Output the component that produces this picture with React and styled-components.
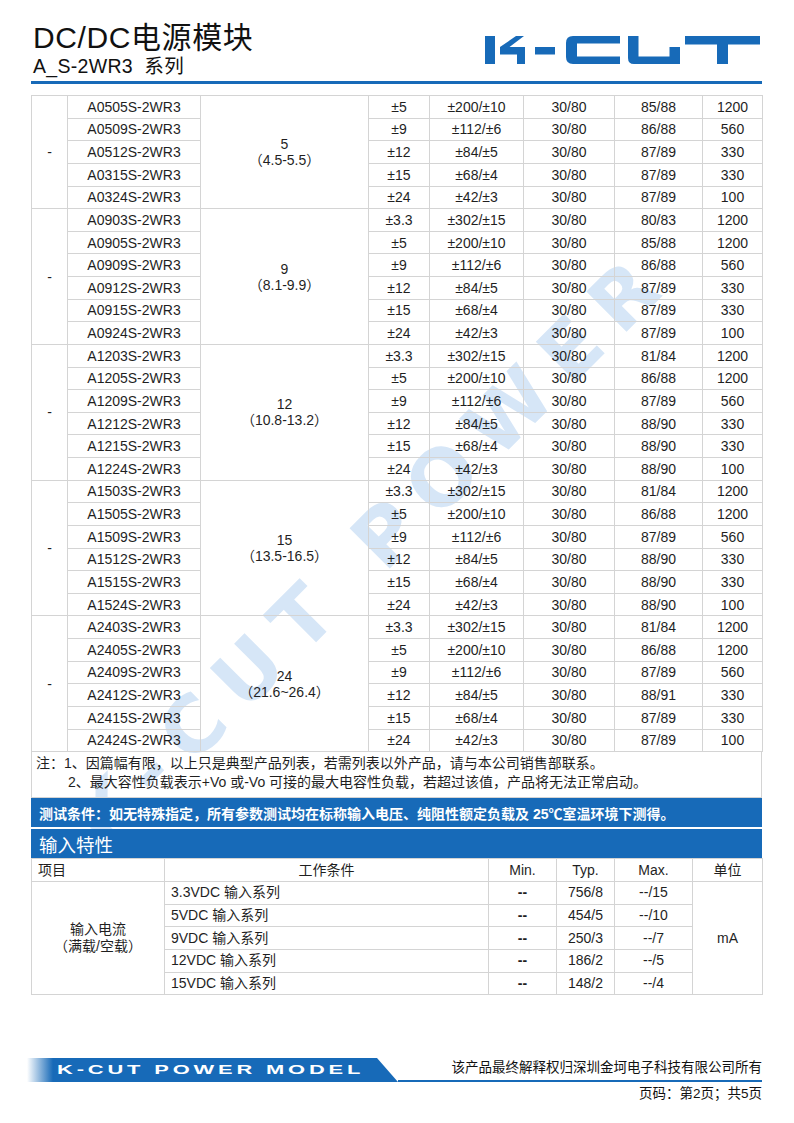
import React from "react";
import styled, { createGlobalStyle } from "styled-components";

const BLUE = "#176ab8";
const GRID = "#d4d4d4";
const INK = "#1f1f1f";

const GlobalStyle = createGlobalStyle`
  html, body {
    margin: 0;
    padding: 0;
    background: #fff;
  }
  body {
    font-family: "Liberation Sans", "Noto Sans CJK SC", sans-serif;
    color: ${INK};
  }
`;

// #region data
const groups = [
  {
    vin: "5",
    range: "（4.5-5.5）",
    rows: [
      ["A0505S-2WR3", "±5", "±200/±10", "30/80", "85/88", "1200"],
      ["A0509S-2WR3", "±9", "±112/±6", "30/80", "86/88", "560"],
      ["A0512S-2WR3", "±12", "±84/±5", "30/80", "87/89", "330"],
      ["A0315S-2WR3", "±15", "±68/±4", "30/80", "87/89", "330"],
      ["A0324S-2WR3", "±24", "±42/±3", "30/80", "87/89", "100"],
    ],
  },
  {
    vin: "9",
    range: "（8.1-9.9）",
    rows: [
      ["A0903S-2WR3", "±3.3", "±302/±15", "30/80", "80/83", "1200"],
      ["A0905S-2WR3", "±5", "±200/±10", "30/80", "85/88", "1200"],
      ["A0909S-2WR3", "±9", "±112/±6", "30/80", "86/88", "560"],
      ["A0912S-2WR3", "±12", "±84/±5", "30/80", "87/89", "330"],
      ["A0915S-2WR3", "±15", "±68/±4", "30/80", "87/89", "330"],
      ["A0924S-2WR3", "±24", "±42/±3", "30/80", "87/89", "100"],
    ],
  },
  {
    vin: "12",
    range: "（10.8-13.2）",
    rows: [
      ["A1203S-2WR3", "±3.3", "±302/±15", "30/80", "81/84", "1200"],
      ["A1205S-2WR3", "±5", "±200/±10", "30/80", "86/88", "1200"],
      ["A1209S-2WR3", "±9", "±112/±6", "30/80", "87/89", "560"],
      ["A1212S-2WR3", "±12", "±84/±5", "30/80", "88/90", "330"],
      ["A1215S-2WR3", "±15", "±68/±4", "30/80", "88/90", "330"],
      ["A1224S-2WR3", "±24", "±42/±3", "30/80", "88/90", "100"],
    ],
  },
  {
    vin: "15",
    range: "（13.5-16.5）",
    rows: [
      ["A1503S-2WR3", "±3.3", "±302/±15", "30/80", "81/84", "1200"],
      ["A1505S-2WR3", "±5", "±200/±10", "30/80", "86/88", "1200"],
      ["A1509S-2WR3", "±9", "±112/±6", "30/80", "87/89", "560"],
      ["A1512S-2WR3", "±12", "±84/±5", "30/80", "88/90", "330"],
      ["A1515S-2WR3", "±15", "±68/±4", "30/80", "88/90", "330"],
      ["A1524S-2WR3", "±24", "±42/±3", "30/80", "88/90", "100"],
    ],
  },
  {
    vin: "24",
    range: "（21.6~26.4）",
    rows: [
      ["A2403S-2WR3", "±3.3", "±302/±15", "30/80", "81/84", "1200"],
      ["A2405S-2WR3", "±5", "±200/±10", "30/80", "86/88", "1200"],
      ["A2409S-2WR3", "±9", "±112/±6", "30/80", "87/89", "560"],
      ["A2412S-2WR3", "±12", "±84/±5", "30/80", "88/91", "330"],
      ["A2415S-2WR3", "±15", "±68/±4", "30/80", "87/89", "330"],
      ["A2424S-2WR3", "±24", "±42/±3", "30/80", "87/89", "100"],
    ],
  },
];

const inputRows = [
  ["3.3VDC 输入系列", "--", "756/8", "--/15"],
  ["5VDC 输入系列", "--", "454/5", "--/10"],
  ["9VDC 输入系列", "--", "250/3", "--/7"],
  ["12VDC 输入系列", "--", "186/2", "--/5"],
  ["15VDC 输入系列", "--", "148/2", "--/4"],
];
// #endregion

// #region styled-components
const Page = styled.div`
  position: relative;
  width: 794px;
  height: 1123px;
  box-sizing: border-box;
  padding: 0 32px 0 31px;
  overflow: hidden;
  display: flex;
  flex-direction: column;
`;

/* faint diagonal brand mark behind the tables */
const Watermark = styled.div`
  position: absolute;
  left: 372px;
  top: 548px;
  transform: translate(-50%, -50%) rotate(-45deg);
  font-family: "DejaVu Sans", sans-serif;
  font-weight: bold;
  font-size: 78px;
  letter-spacing: 18px;
  color: #d6e6f7;
  white-space: nowrap;
  z-index: 0;
  pointer-events: none;
`;

const Content = styled.div`
  position: relative;
  z-index: 1;
  flex: 1;
  display: flex;
  flex-direction: column;
`;

const Header = styled.header`
  display: flex;
  justify-content: space-between;
  align-items: flex-end;
  padding-top: 22px;
  padding-bottom: 3px;
  border-bottom: 3px solid ${BLUE};
`;

const TitleBlock = styled.div`
  display: flex;
  flex-direction: column;
  margin-left: 2px;
`;

const Title = styled.h1`
  margin: 0;
  font-size: 30px;
  line-height: 32px;
  font-weight: normal;
  letter-spacing: 0.6px;
  color: #111;
`;

const Subtitle = styled.div`
  font-size: 19.5px;
  line-height: 24px;
  letter-spacing: 0.3px;
  color: #111;
`;

const LogoSvg = styled.svg`
  width: 276px;
  height: 28px;
  margin-bottom: 14px;
  margin-right: 1px;
`;

const SpecTable = styled.table`
  margin-top: 11px;
  width: 100%;
  border-collapse: collapse;
  table-layout: fixed;
`;

const Row = styled.tr`
  height: 22.63px;
`;

const Cell = styled.td`
  border: 1px solid ${GRID};
  padding: 0;
  text-align: center;
  vertical-align: middle;
  line-height: 16px;
  font-size: 14px;
  color: ${INK};
`;

const NoteBox = styled.div`
  border: 1px solid ${GRID};
  border-top: none;
  padding: 2px 4px 5px 4px;
  font-size: 14px;
  line-height: 19px;
`;

const NoteLine = styled.div`
  padding-left: ${({ $indent }) => ($indent ? "32px" : "0")};
`;

const Bar = styled.div`
  background: ${BLUE};
  color: #fff;
  height: 29px;
  margin-top: ${({ $gap }) => ($gap ? "2px" : "0")};
  display: flex;
  align-items: center;
  padding-left: 8px;
  font-size: ${({ $tall }) => ($tall ? "18.5px" : "14px")};
  font-weight: ${({ $tall }) => ($tall ? "normal" : "bold")};
`;

const InputTable = styled.table`
  width: 100%;
  border-collapse: collapse;
  table-layout: fixed;
`;

const InCell = styled.td`
  border: 1px solid ${GRID};
  padding: 0 ${({ $left }) => ($left ? "6px" : "0")};
  text-align: ${({ $left }) => ($left ? "left" : "center")};
  vertical-align: middle;
  font-family: "Liberation Sans Narrow", "Liberation Sans", "Noto Sans CJK SC", sans-serif;
  font-size: 14px;
  line-height: 17px;
  font-weight: ${({ $bold }) => ($bold ? "bold" : "normal")};
  color: ${INK};
`;

const HeadRow = styled.tr`
  height: 23px;
`;

const Footer = styled.footer`
  margin-top: auto;
  padding-bottom: 20px;
`;

const FooterTop = styled.div`
  display: flex;
  align-items: flex-end;
  margin-left: -4px;
`;

const FooterBanner = styled.div`
  width: 371px;
  height: 24px;
  flex: none;
  background: linear-gradient(to right, #ffffff 0px, ${BLUE} 26px, ${BLUE} 100%);
  clip-path: polygon(0 0, calc(100% - 21px) 0, 100% 100%, 0 100%);
  display: flex;
  align-items: center;
  padding-left: 30px;
  box-sizing: border-box;
`;

const BannerText = styled.span`
  color: #fff;
  font-family: "Liberation Sans", sans-serif;
  font-weight: bold;
  font-size: 12.5px;
  letter-spacing: 2.2px;
  white-space: nowrap;
  display: inline-block;
  transform: scaleX(1.75);
  transform-origin: left center;
`;

const FooterRule = styled.div`
  flex: 1;
  border-bottom: 2px solid ${BLUE};
  text-align: right;
  font-size: 13.5px;
  line-height: 18px;
  padding-bottom: 3px;
  color: #111;
`;

const PageNo = styled.div`
  text-align: right;
  font-size: 13.5px;
  line-height: 18px;
  margin-top: 3px;
  color: #111;
`;
// #endregion

// #region component
const Logo = () => (
  <LogoSvg viewBox="0 0 276 28" aria-label="K-CUT">
    <g fill={BLUE}>
      <rect x="0" y="0" width="10" height="28" />
      <polygon points="31,0 39,0 24.5,11 40,11 40,28 32,28 32,18.5 15,18.5 15,11" />
      <rect x="50" y="11" width="20" height="7.5" />
      <path d="M135 0 H88 Q81 0 81 7 V21 Q81 28 88 28 H135 V20.5 H92 V7.5 H135 Z" />
      <path d="M143 0 H153.5 V20.5 H184.5 V11 H195 V28 H149 Q143 28 143 22 Z" />
      <path d="M200 0 H275 V8.5 H243 V28 H232 V8.5 H200 Z" />
    </g>
  </LogoSvg>
);

const App = () => (
  <>
    <GlobalStyle />
    <Page>
      <Watermark>K-CUT POWER</Watermark>
      <Content>
        <Header>
          <TitleBlock>
            <Title>DC/DC电源模块</Title>
            <Subtitle>A_S-2WR3&nbsp; 系列</Subtitle>
          </TitleBlock>
          <Logo />
        </Header>

        <SpecTable>
          <colgroup>
            <col style={{ width: 36 }} />
            <col style={{ width: 133 }} />
            <col style={{ width: 168 }} />
            <col style={{ width: 61 }} />
            <col style={{ width: 94 }} />
            <col style={{ width: 91 }} />
            <col style={{ width: 88 }} />
            <col style={{ width: 60 }} />
          </colgroup>
          <tbody>
            {groups.map((g) =>
              g.rows.map((r, i) => (
                <Row key={r[0]}>
                  {i === 0 && <Cell rowSpan={g.rows.length}>-</Cell>}
                  <Cell>{r[0]}</Cell>
                  {i === 0 && (
                    <Cell rowSpan={g.rows.length}>
                      {g.vin}
                      <br />
                      {g.range}
                    </Cell>
                  )}
                  <Cell>{r[1]}</Cell>
                  <Cell>{r[2]}</Cell>
                  <Cell>{r[3]}</Cell>
                  <Cell>{r[4]}</Cell>
                  <Cell>{r[5]}</Cell>
                </Row>
              ))
            )}
          </tbody>
        </SpecTable>

        <NoteBox>
          <NoteLine>注：1、因篇幅有限，以上只是典型产品列表，若需列表以外产品，请与本公司销售部联系。</NoteLine>
          <NoteLine $indent>2、最大容性负载表示+Vo 或-Vo 可接的最大电容性负载，若超过该值，产品将无法正常启动。</NoteLine>
        </NoteBox>

        <Bar>测试条件：如无特殊指定，所有参数测试均在标称输入电压、纯阻性额定负载及 25℃室温环境下测得。</Bar>
        <Bar $tall $gap>输入特性</Bar>

        <InputTable>
          <colgroup>
            <col style={{ width: 133 }} />
            <col style={{ width: 324 }} />
            <col style={{ width: 68 }} />
            <col style={{ width: 58 }} />
            <col style={{ width: 78 }} />
            <col style={{ width: 70 }} />
          </colgroup>
          <tbody>
            <HeadRow>
              <InCell $left>项目</InCell>
              <InCell>工作条件</InCell>
              <InCell>Min.</InCell>
              <InCell>Typ.</InCell>
              <InCell>Max.</InCell>
              <InCell>单位</InCell>
            </HeadRow>
            {inputRows.map((r, i) => (
              <Row key={r[0]}>
                {i === 0 && (
                  <InCell rowSpan={inputRows.length}>
                    输入电流
                    <br />
                    （满载/空载）
                  </InCell>
                )}
                <InCell $left>{r[0]}</InCell>
                <InCell $bold>{r[1]}</InCell>
                <InCell>{r[2]}</InCell>
                <InCell>{r[3]}</InCell>
                {i === 0 && <InCell rowSpan={inputRows.length}>mA</InCell>}
              </Row>
            ))}
          </tbody>
        </InputTable>

        <Footer>
          <FooterTop>
            <FooterBanner>
              <BannerText>K-CUT POWER MODEL</BannerText>
            </FooterBanner>
            <FooterRule>该产品最终解释权归深圳金坷电子科技有限公司所有</FooterRule>
          </FooterTop>
          <PageNo>页码：第2页；共5页</PageNo>
        </Footer>
      </Content>
    </Page>
  </>
);
// #endregion

export default App;
